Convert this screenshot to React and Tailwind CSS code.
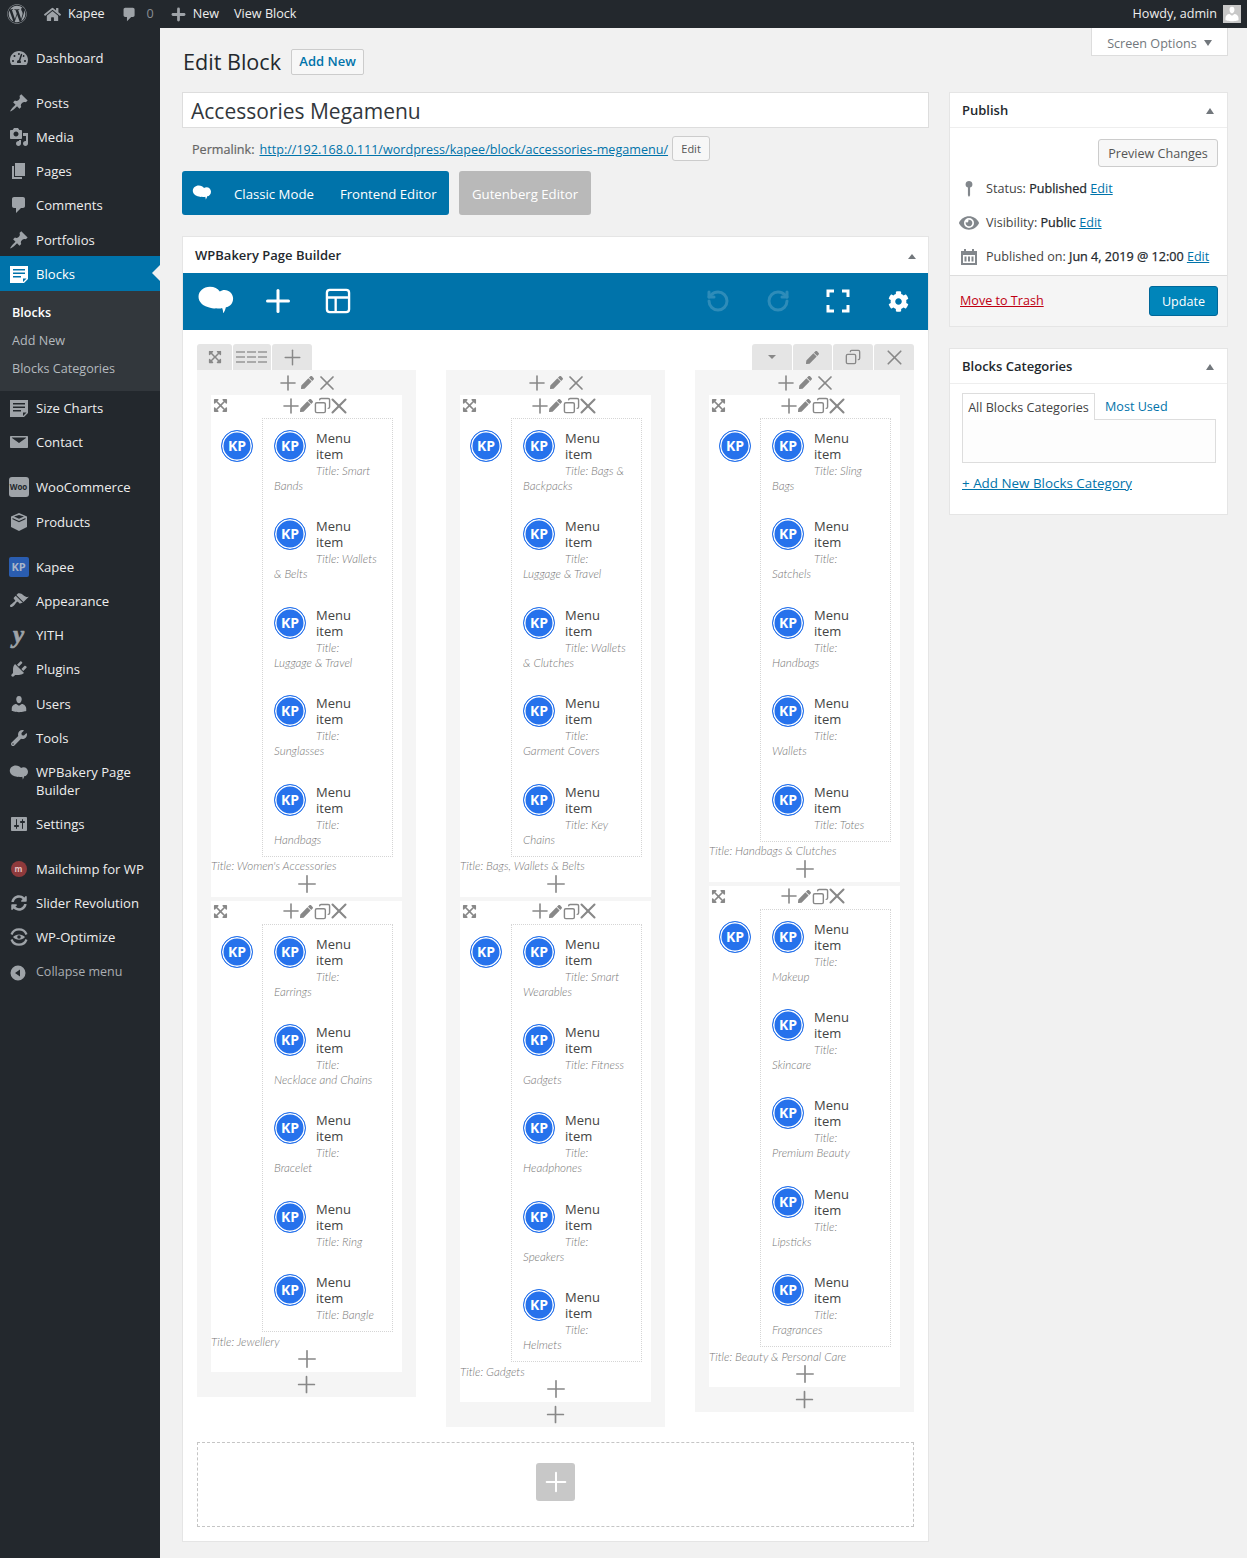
import React from 'react';
import { FaWordpress, FaHome, FaTachometerAlt, FaWrench, FaEye, FaCog, FaExpandArrowsAlt, FaPen, FaSyncAlt } from 'react-icons/fa';
import { Plus, X, Copy, RotateCcw, RotateCw } from 'lucide-react';

// dashicon style 20x20 glyphs
const glyphs = {
    pin: 'M10.44 3.02l1.82-1.82 6.36 6.35-1.83 1.82c-1.05-.68-2.48-.57-3.41.36l-.75.75c-.92.93-1.04 2.35-.35 3.41l-1.83 1.82-2.41-2.41-2.8 2.79c-.42.42-3.38 2.71-3.8 2.29s1.86-3.39 2.28-3.81l2.79-2.79L4.1 9.36l1.83-1.82c1.05.69 2.48.57 3.4-.36l.75-.75c.93-.92 1.05-2.35.36-3.41z',
    media: 'M13 11V4c0-.55-.45-1-1-1h-1.67L9 1H5L3.67 3H2c-.55 0-1 .45-1 1v7c0 .55.45 1 1 1h10c.55 0 1-.45 1-1zM7 4.5c1.38 0 2.5 1.12 2.5 2.5S8.38 9.5 7 9.5 4.5 8.38 4.5 7 5.62 4.5 7 4.5zM14 6h5v10.5c0 1.38-1.12 2.5-2.5 2.5S14 17.88 14 16.5s1.12-2.5 2.5-2.5c.17 0 .34.02.5.05V9h-3V6zm-4 8.05V13h2v3.5c0 1.38-1.12 2.5-2.5 2.5S7 17.88 7 16.5 8.12 14 9.5 14c.17 0 .34.02.5.05z',
    pages: 'M6 15V2h10v13H6zm-1 1h8v2H3V5h2v11z',
    comment: 'M5 2h9c1.1 0 2 .9 2 2v7c0 1.1-.9 2-2 2h-2l-5 5v-5H5c-1.1 0-2-.9-2-2V4c0-1.1.9-2 2-2z',
    post: 'M1 2h18v13l-4 4H1V2zm3 3v1.5h12V5H4zm0 3.5V10h12V8.5H4zM4 12v1.5h8V12H4zm10 2.5V18l3.5-3.5H14z',
    mail: 'M2 4h16c.6 0 1 .4 1 1v10c0 .6-.4 1-1 1H2c-.6 0-1-.4-1-1V5c0-.6.4-1 1-1zm1 2l7 5 7-5v-.5H3V6z',
    box: 'M10 1l8 3.5v10.5L10 19l-8-4V4.5L10 1zm0 2L5 4.6l5 2.2 5-2.2L10 3zM3.5 6v1.2l6.5 3 6.5-3V6L10 9 3.5 6z',
    brush: 'M14.48 11.06L7.41 3.99l1.5-1.5c.5-.56 2.3-.47 3.51.32 1.21.8 1.43 1.28 2.91 2.1 1.18.64 2.45 1.26 4.45.85zm-.71.71L6.7 4.7 4.93 6.47c-.39.39-.39 1.02 0 1.41l1.06 1.06c.39.39.39 1.03 0 1.42-.6.6-1.43 1.11-2.21 1.69-.35.26-.7.53-1.01.84C1.43 13.23.4 14.89 1.3 15.79c.9.89 2.56-.13 3.91-1.48.31-.31.58-.66.85-1.01.57-.78 1.08-1.61 1.69-2.21.39-.39 1.02-.39 1.41 0l1.06 1.06c.39.39 1.02.39 1.41 0z',
    plug: 'M13.11 4.36L9.87 7.6 8 5.73l3.24-3.24c.35-.34 1.05-.2 1.56.32.52.51.66 1.21.31 1.55zm-8 1.77l.91-1.12 9.01 9.01-1.19.84c-.71.71-2.63 1.16-3.82 1.16H6.14L4.9 17.26c-.59.59-1.54.59-2.12 0-.59-.58-.59-1.53 0-2.12l1.24-1.24v-3.88c0-1.13.4-3.19 1.09-3.89zm7.26 3.97l3.24-3.24c.34-.35 1.04-.21 1.55.31.52.51.66 1.21.31 1.55l-3.24 3.25z',
    user: 'M10 9.25c-2.27 0-2.73-3.44-2.73-3.44C7 4.02 7.82 2 9.97 2c2.16 0 2.98 2.02 2.71 3.81 0 0-.41 3.44-2.68 3.44zm0 2.57L12.72 10c2.39 0 4.52 2.33 4.52 4.53v2.49s-3.65 1.13-7.24 1.13c-3.65 0-7.24-1.13-7.24-1.13v-2.49c0-2.25 1.94-4.48 4.47-4.48z',
    sliders: 'M18 16V4c0-.55-.45-1-1-1H3c-.55 0-1 .45-1 1v12c0 .55.45 1 1 1h14c.55 0 1-.45 1-1zM8 11h1c.55 0 1 .45 1 1s-.45 1-1 1H8v1.5c0 .28-.22.5-.5.5s-.5-.22-.5-.5V13H6c-.55 0-1-.45-1-1s.45-1 1-1h1V5.5c0-.28.22-.5.5-.5s.5.22.5.5V11zm5-2h-1c-.55 0-1-.45-1-1s.45-1 1-1h1V5.5c0-.28.22-.5.5-.5s.5.22.5.5V7h1c.55 0 1 .45 1 1s-.45 1-1 1h-1v5.5c0 .28-.22.5-.5.5s-.5-.22-.5-.5V9z',
    cloud: 'M6.800 2.500c2.300 0 4.200 1 5.200 2.500.7-.5 1.600-.8 2.500-.8 2.500 0 4.500 1.900 4.500 4.500 0 2.400-1.600 4.400-3.800 4.600-.2 1.100-.7 2.300-1.500 3.200.1-1-.1-2-.5-2.800-1 .4-2.100.3-3.200.1-.9.2-1.900.2-3.100-.3C3.500 13 .8 10.700.8 7.800.8 4.800 3.400 2.500 6.800 2.500z',
    collapse: 'M10 2.500a7.500 7.500 0 1 1 0 15 7.500 7.500 0 0 1 0-15zM12 6.500L7 10l5 3.500v-7z',
    key: 'M10 1a3.800 3.800 0 0 1 1.200 7.400V17l-1.200 2-1.200-2V8.400A3.800 3.800 0 0 1 10 1z',
    calendar: 'M5 2h2v2h6V2h2v2h3v14H2V4h3V2zM4 8v8h12V8H4zm1.500 1.500h2v5h-2v-5zm3.500 0h2v5H9v-5zm3.500 0h2v5h-2v-5z',
};

const Glyph = ({ name, className }) => (
    <svg viewBox="0 0 20 20" fill="currentColor" className={className}>
        <path d={glyphs[name]} fillRule="evenodd" />
    </svg>
);

const side = 'w-[20px] h-[20px] text-[#9ea3a8]';

const WooIcon = () => (
    <span className="flex h-[20px] w-[20px] items-center justify-center rounded-[3px] bg-[#9ea3a8] text-[8px] font-bold text-[#23282d]">Woo</span>
);
const KpIcon = () => (
    <span className="flex h-[20px] w-[20px] items-center justify-center rounded-[2px] bg-[#2a5db0] text-[11px] font-bold text-[#a9b5c9]">KP</span>
);
const YithIcon = () => (
    <span className="font-['Liberation_Serif',serif] text-[25px] font-bold italic leading-[20px] text-[#9ea3a8] [-webkit-text-stroke:0.7px_#9ea3a8]">y</span>
);
const MailchimpIcon = () => (
    <span className="flex h-[16px] w-[16px] items-center justify-center rounded-full bg-[#8e3a3c] text-[8px] font-bold text-[#e5c5c5]">m</span>
);
const OptimizeIcon = () => (
    <svg viewBox="0 0 20 20" className={side} fill="none" stroke="currentColor" strokeWidth="2.2">
        <path d="M2.500 7.500a8 8 0 0 1 15 0M17.500 12.500a8 8 0 0 1-15 0" />
        <path d="M4 10c3-3.500 9-3.500 12 0-3 3.500-9 3.500-12 0z" fill="currentColor" stroke="none" />
        <circle cx="10" cy="10" r="1.800" fill="#23282d" stroke="none" />
    </svg>
);

const menu = [
    [{ label: 'Dashboard', icon: <FaTachometerAlt className="h-[18px] w-[18px] text-[#9ea3a8]" /> }],
    [
        { label: 'Posts', icon: <Glyph name="pin" className={side} /> },
        { label: 'Media', icon: <Glyph name="media" className={side} /> },
        { label: 'Pages', icon: <Glyph name="pages" className={side} /> },
        { label: 'Comments', icon: <Glyph name="comment" className={side} /> },
        { label: 'Portfolios', icon: <Glyph name="pin" className={side} /> },
        { label: 'Blocks', active: true, icon: <Glyph name="post" className="h-[20px] w-[20px] text-white" /> },
        { label: 'Size Charts', icon: <Glyph name="post" className={side} /> },
        { label: 'Contact', icon: <Glyph name="mail" className={side} /> },
    ],
    [
        { label: 'WooCommerce', icon: <WooIcon /> },
        { label: 'Products', icon: <Glyph name="box" className={side} /> },
    ],
    [
        { label: 'Kapee', icon: <KpIcon /> },
        { label: 'Appearance', icon: <Glyph name="brush" className={side} /> },
        { label: 'YITH', icon: <YithIcon /> },
        { label: 'Plugins', icon: <Glyph name="plug" className={side} /> },
        { label: 'Users', icon: <Glyph name="user" className={side} /> },
        { label: 'Tools', icon: <FaWrench className="h-[16px] w-[16px] text-[#9ea3a8]" /> },
        { label: 'WPBakery Page Builder', tall: true, icon: <Glyph name="cloud" className={side} /> },
        { label: 'Settings', icon: <Glyph name="sliders" className={side} /> },
    ],
    [
        { label: 'Mailchimp for WP', icon: <MailchimpIcon /> },
        { label: 'Slider Revolution', icon: <FaSyncAlt className="h-[16px] w-[16px] text-[#9ea3a8]" /> },
        { label: 'WP-Optimize', icon: <OptimizeIcon /> },
    ],
];

const columns = [
    [
        {
            title: "Title: Women's Accessories",
            items: [['Title: Smart', 'Bands'], ['Title: Wallets', '& Belts'], ['Title:', 'Luggage & Travel'], ['Title:', 'Sunglasses'], ['Title:', 'Handbags']],
        },
        {
            title: 'Title: Jewellery',
            items: [['Title:', 'Earrings'], ['Title:', 'Necklace and Chains'], ['Title:', 'Bracelet'], ['Title: Ring'], ['Title: Bangle']],
        },
    ],
    [
        {
            title: 'Title: Bags, Wallets & Belts',
            items: [['Title: Bags &', 'Backpacks'], ['Title:', 'Luggage & Travel'], ['Title: Wallets', '& Clutches'], ['Title:', 'Garment Covers'], ['Title: Key', 'Chains']],
        },
        {
            title: 'Title: Gadgets',
            items: [['Title: Smart', 'Wearables'], ['Title: Fitness', 'Gadgets'], ['Title:', 'Headphones'], ['Title:', 'Speakers'], ['Title:', 'Helmets']],
        },
    ],
    [
        {
            title: 'Title: Handbags & Clutches',
            items: [['Title: Sling', 'Bags'], ['Title:', 'Satchels'], ['Title:', 'Handbags'], ['Title:', 'Wallets'], ['Title: Totes']],
        },
        {
            title: 'Title: Beauty & Personal Care',
            items: [['Title:', 'Makeup'], ['Title:', 'Skincare'], ['Title:', 'Premium Beauty'], ['Title:', 'Lipsticks'], ['Title:', 'Fragrances']],
        },
    ],
];

const Sidebar = () => (
    <aside className="w-[160px] shrink-0 bg-[#23282d] pt-[12.6px] text-[13.1px] text-[#eeeeee]">
        {menu.map((group, i) => (
            <div key={i} className="mb-[11px]">
                {group.map(item => (
                    <React.Fragment key={item.label}>
                        <div className={`relative flex items-center ${item.tall ? 'h-[52px]' : item.active ? '-mt-[0.4px] h-[34.6px]' : 'h-[34.2px]'} ${item.active ? 'bg-[#0073aa] text-white' : ''}`}>
                            <span className={`flex w-[36px] shrink-0 justify-center pl-[1px] ${item.tall ? 'self-start pt-[8px]' : ''}`}>{item.icon}</span>
                            <span className="leading-[18px]">{item.label}</span>
                            {item.active && (
                                <span className="absolute right-0 top-[9px] h-0 w-0 border-y-[8px] border-r-[8px] border-y-transparent border-r-[#f1f1f1]" />
                            )}
                        </div>
                        {item.active && (
                            <div className="bg-[#32373c] py-[8px] pl-[12px] text-[12.6px] leading-[28px] text-[#b4b9be]">
                                <div className="font-semibold text-white">Blocks</div>
                                <div>Add New</div>
                                <div>Blocks Categories</div>
                            </div>
                        )}
                    </React.Fragment>
                ))}
            </div>
        ))}
        <div className="-mt-[10px] flex h-[34px] items-center text-[12.5px] text-[#aaaeb2]">
            <span className="flex w-[36px] shrink-0 justify-center">
                <Glyph name="collapse" className={side} />
            </span>
            Collapse menu
        </div>
    </aside>
);

const TopBar = () => (
    <header className="flex h-[28px] items-center justify-between bg-[#23282d] pr-[6px] text-[12.6px] text-[#eeeeee]">
        <div className="flex items-center">
            <FaWordpress className="ml-[7px] h-[20px] w-[20px] text-[#9ea3a8]" />
            <FaHome className="ml-[17px] h-[17px] w-[17px] text-[#9ea3a8]" />
            <span className="ml-[7px]">Kapee</span>
            <Glyph name="comment" className="ml-[16px] h-[17px] w-[17px] text-[#9ea3a8]" />
            <span className="ml-[9px] text-[#8a8f94]">0</span>
            <Plus size={19} strokeWidth={3.5} className="ml-[15px] text-[#9ea3a8]" />
            <span className="ml-[5px]">New</span>
            <span className="ml-[15px]">View Block</span>
        </div>
        <div className="flex items-center gap-[6px]">
            <span>Howdy, admin</span>
            <span className="flex h-[18px] w-[18px] items-end justify-center overflow-hidden bg-[#c8c8c8]">
                <Glyph name="user" className="h-[18px] w-[18px] text-white" />
            </span>
        </div>
    </header>
);

const KpBadge = ({ className }) => (
    <span className={`flex h-[32px] w-[32px] items-center justify-center rounded-full border-[1.5px] border-[#2672ec] bg-[#2672ec] text-[14px] font-bold leading-none text-white shadow-[inset_0_0_0_1.5px_#ffffff] ${className}`}>
        KP
    </span>
);

const MenuItem = ({ lines }) => (
    <div className="flow-root">
        <KpBadge className="float-left mb-[10px] mr-[10px]" />
        <div className="text-[13px] leading-[16px] text-[#444444]">Menu<br />item</div>
        <div className="whitespace-nowrap pt-[1px] font-['Lato',sans-serif] text-[11.6px] font-light italic leading-[15px] text-[#777777]">
            {lines.map((line, i) => (
                <React.Fragment key={i}>
                    {i > 0 && <br />}
                    {line}
                </React.Fragment>
            ))}
        </div>
    </div>
);

const Section = ({ section }) => (
    <div className="bg-white">
        <div className="relative flex h-[23px] items-center justify-center pb-[2px] pl-[17px]">
            <FaExpandArrowsAlt className="absolute left-[2px] top-[3px] h-[15px] w-[15px] text-[#888888]" />
            <Plus size={24} strokeWidth={1.6} className="-mx-[5px] text-[#888888]" />
            <FaPen className="ml-[2px] h-[13px] w-[13px] text-[#888888]" />
            <Copy size={17} strokeWidth={2} className="ml-[1px] -scale-x-100 text-[#888888]" />
            <X size={26} strokeWidth={1.9} className="-mx-[6px] ml-[-5px] text-[#888888]" />
        </div>
        <div className="flex items-start pr-[9px]">
            <KpBadge className="ml-[10px] mr-[9px] mt-[12px] shrink-0" />
            <div className="flex-1 space-y-[25.4px] border border-dotted border-[#d5d5d5] px-[11px] pb-[9px] pt-[11px]">
                {section.items.map((lines, i) => <MenuItem key={i} lines={lines} />)}
            </div>
        </div>
        <div className="mt-[1.5px] font-['Lato',sans-serif] text-[11.6px] font-light italic leading-[15px] text-[#777777]">{section.title}</div>
        <div className="flex h-[23.5px] items-center justify-center pb-[2.5px]">
            <Plus size={28} strokeWidth={1.4} className="-my-[4px] text-[#888888]" />
        </div>
    </div>
);

const Column = ({ sections }) => (
    <div className="bg-[#f5f5f5] px-[14px]">
        <div className="flex h-[25px] items-center justify-center">
            <Plus size={24} strokeWidth={1.6} className="-mx-[5px] text-[#888888]" />
            <FaPen className="ml-[6px] h-[13px] w-[13px] text-[#888888]" />
            <X size={24} strokeWidth={1.7} className="-mx-[6px] ml-[1px] text-[#888888]" />
        </div>
        <div className="space-y-[4px]">
            {sections.map(section => <Section key={section.title} section={section} />)}
        </div>
        <div className="flex h-[25px] items-center justify-center">
            <Plus size={27} strokeWidth={1.5} className="text-[#888888]" />
        </div>
    </div>
);

const RowTab = ({ w, children }) => (
    <span className={`flex h-[26px] items-center justify-center rounded-t-[3px] bg-[#e5e5e5] text-[#888888] ${w}`}>{children}</span>
);

const Builder = () => (
    <section className="border border-[#e5e5e5] bg-white">
        <div className="flex h-[36px] items-center justify-between pl-[12px] pr-[12px] pt-[2px]">
            <h2 className="text-[13px] font-semibold text-[#23282d]">WPBakery Page Builder</h2>
            <span className="h-0 w-0 border-x-[4px] border-b-[5px] border-x-transparent border-b-[#72777c]" />
        </div>
        <div className="flex h-[57px] items-center bg-[#0073aa] pb-[1px] text-white">
            <Glyph name="cloud" className="ml-[14px] h-[38px] w-[38px]" />
            <Plus size={36} strokeWidth={2} className="ml-[25px]" />
            <svg viewBox="0 0 24 24" fill="none" stroke="currentColor" strokeWidth="2" className="ml-[28px] h-[28px] w-[28px]">
                <rect x="2.500" y="2.500" width="19" height="19" rx="2.500" />
                <path d="M2.500 9h19M10 9v12.500" />
            </svg>
            <div className="ml-auto flex items-center gap-[34px] pr-[17px]">
                <span className="flex w-[26px] justify-center"><RotateCcw size={24} strokeWidth={3} className="text-[#2e8cb9]" /></span>
                <span className="flex w-[26px] justify-center"><RotateCw size={24} strokeWidth={3} className="text-[#2e8cb9]" /></span>
                <span className="flex w-[26px] justify-center">
                    <svg viewBox="0 0 24 24" fill="none" stroke="currentColor" strokeWidth="3" className="h-[24px] w-[24px]">
                        <path d="M2 8V2h6M16 2h6v6M22 16v6h-6M8 22H2v-6" />
                    </svg>
                </span>
                <span className="flex w-[26px] justify-center"><FaCog className="h-[21px] w-[21px]" /></span>
            </div>
        </div>
        <div className="px-[14px] pb-[14px] pt-[14px]">
            <div className="flex justify-between">
                <div className="flex gap-[1px]">
                    <RowTab w="w-[35px]"><FaExpandArrowsAlt className="h-[14px] w-[14px]" /></RowTab>
                    <RowTab w="w-[38px]">
                        <svg viewBox="0 0 32 14" fill="#aaaaaa" className="h-[14px] w-[32px]">
                            <path d="M0 1h9v2H0zM11 1h9v2h-9zM22 1h9v2h-9zM0 6h9v2H0zM11 6h9v2h-9zM22 6h9v2h-9zM0 11h9v2H0zM11 11h9v2h-9zM22 11h9v2h-9z" />
                        </svg>
                    </RowTab>
                    <RowTab w="w-[40px]"><Plus size={25} strokeWidth={1.4} /></RowTab>
                </div>
                <div className="flex gap-[1px]">
                    <RowTab w="w-[40px]"><span className="h-0 w-0 border-x-[4px] border-t-[4px] border-x-transparent border-t-[#888888]" /></RowTab>
                    <RowTab w="w-[39px]"><FaPen className="h-[13px] w-[13px]" /></RowTab>
                    <RowTab w="w-[40px]"><Copy size={16} strokeWidth={2} className="-scale-x-100" /></RowTab>
                    <RowTab w="w-[40px]"><X size={25} strokeWidth={1.6} /></RowTab>
                </div>
            </div>
            <div className="grid grid-cols-3 items-start gap-[30px]">
                {columns.map((sections, i) => <Column key={i} sections={sections} />)}
            </div>
            <div className="mt-[15px] flex h-[85px] items-center justify-center border border-dashed border-[#c5c5c5] pb-[5px]">
                <span className="flex h-[38px] w-[39px] items-center justify-center rounded-[3px] bg-[#c8c8c8] text-white">
                    <Plus size={32} strokeWidth={1.5} />
                </span>
            </div>
        </div>
    </section>
);

const Caret = () => <span className="h-0 w-0 border-x-[4px] border-b-[6px] border-x-transparent border-b-[#72777c]" />;

const MetaRow = ({ icon, children }) => (
    <div className="flex h-[34px] items-center text-[12.6px] text-[#444444]">
        <span className="flex w-[36px] shrink-0 justify-center pl-[2px]">{icon}</span>
        <span>{children}</span>
    </div>
);

const strong = 'font-normal text-[#23282d] [-webkit-text-stroke:0.25px_#23282d]';

const PublishBox = () => (
    <section className="border border-[#e5e5e5] bg-white">
        <div className="flex h-[35px] items-center justify-between border-b border-[#eeeeee] pl-[12px] pr-[13px] pt-[2px]">
            <h2 className="text-[13px] font-semibold text-[#23282d]">Publish</h2>
            <Caret />
        </div>
        <div className="flex justify-end pr-[9px] pt-[11px]">
            <span className="flex h-[28px] w-[120px] items-center justify-center rounded-[3px] border border-[#cccccc] bg-[#f7f7f7] pt-[2px] text-[12.6px] text-[#555555]">Preview Changes</span>
        </div>
        <div className="pt-[5px]">
            <MetaRow icon={<Glyph name="key" className="h-[18px] w-[18px] text-[#82878c]" />}>
                Status: <b className={strong}>Published</b> <a className="text-[#0073aa] underline">Edit</a>
            </MetaRow>
            <MetaRow icon={<FaEye className="h-[20px] w-[20px] text-[#82878c]" />}>
                Visibility: <b className={strong}>Public</b> <a className="text-[#0073aa] underline">Edit</a>
            </MetaRow>
            <MetaRow icon={<Glyph name="calendar" className="h-[20px] w-[20px] text-[#82878c]" />}>
                Published on: <b className={strong}>Jun 4, 2019 @ 12:00</b> <a className="text-[#0073aa] underline">Edit</a>
            </MetaRow>
        </div>
        <div className="mt-[1px] flex h-[51px] items-center justify-between border-t border-[#dddddd] bg-[#f5f5f5] pl-[10px] pr-[9px]">
            <a className="text-[12.6px] text-[#bf0012] underline">Move to Trash</a>
            <span className="flex h-[30px] w-[69px] items-center justify-center rounded-[3px] border border-[#006799] bg-[#0085ba] pt-[2px] text-[12.6px] text-white">Update</span>
        </div>
    </section>
);

const CategoriesBox = () => (
    <section className="mt-[21px] h-[167px] border border-[#e5e5e5] bg-white">
        <div className="flex h-[35px] items-center justify-between border-b border-[#eeeeee] pl-[12px] pr-[13px] pt-[2px]">
            <h2 className="text-[13px] font-semibold text-[#23282d]">Blocks Categories</h2>
            <Caret />
        </div>
        <div className="px-[12px] pt-[9px]">
            <div className="flex items-end text-[12.6px]">
                <span className="relative z-10 -mb-[1px] flex h-[27px] w-[133px] items-center justify-center border border-b-0 border-[#dddddd] bg-white pt-[2px] text-[#444444]">All Blocks Categories</span>
                <span className="ml-[10px] pb-[2px] text-[#0073aa]">Most Used</span>
            </div>
            <div className="h-[44px] w-[254px] border border-[#dddddd] bg-[#fdfdfd]" />
            <a className="mt-[10px] block text-[13.4px] font-medium text-[#0073aa] underline">+ Add New Blocks Category</a>
        </div>
    </section>
);

const App = () => (
    <div className="min-h-[1558px] w-[1247px] bg-[#f1f1f1] font-['Open_Sans',sans-serif] text-[13px]">
        <TopBar />
        <div className="flex min-h-[1530px] items-stretch">
            <Sidebar />
            <main className="w-[1087px] pl-[22px] pr-[19px]">
                <div className="flex h-[64px] items-start justify-between">
                    <div className="flex items-center gap-[10px] pl-[1px] pt-[19px]">
                        <h1 className="text-[21.6px] leading-[30px] text-[#23282d]">Edit Block</h1>
                        <span className="flex h-[26px] w-[73px] items-center justify-center rounded-[2px] border border-[#cccccc] bg-[#f7f7f7] text-[13px] font-semibold text-[#0073aa]">Add New</span>
                    </div>
                    <div className="flex h-[28px] w-[137px] items-center justify-center gap-[7px] border border-t-0 border-[#dddddd] bg-white pt-[5px] text-[12.6px] text-[#72777c]">
                        Screen Options
                        <span className="-mt-[3px] h-0 w-0 border-x-[4px] border-t-[6px] border-x-transparent border-t-[#72777c]" />
                    </div>
                </div>
                <div className="flex items-start justify-between">
                    <div className="w-[747px]">
                        <div className="flex h-[36px] items-center border border-[#dddddd] bg-white pl-[8px] pt-[3px] text-[21px] text-[#32373c]">Accessories Megamenu</div>
                        <div className="mt-[8px] flex h-[25px] items-center pl-[10px] text-[12.6px] text-[#666666]">
                            <span className="mt-[3px] [-webkit-text-stroke:0.2px_#666666]">Permalink:</span>
                            <a className="ml-[5px] mt-[3px] text-[#0073aa] underline">http://192.168.0.111/wordpress/kapee/block/accessories-megamenu/</a>
                            <span className="ml-[4px] flex h-[25px] w-[38px] items-center justify-center rounded-[3px] border border-[#cccccc] bg-[#f7f7f7] pt-[1px] text-[11px] text-[#555555]">Edit</span>
                        </div>
                        <div className="mt-[10px] flex gap-[10px] text-[13.2px] text-white">
                            <div className="flex h-[44px] w-[267px] items-center rounded-[3px] bg-[#0073aa] pt-[3px]">
                                <Glyph name="cloud" className="-mt-[3px] ml-[10px] h-[20px] w-[20px]" />
                                <span className="ml-[22px]">Classic Mode</span>
                                <span className="ml-[26px]">Frontend Editor</span>
                            </div>
                            <div className="flex h-[44px] w-[132px] items-center justify-center rounded-[3px] bg-[#b9b9b9] pt-[3px]">Gutenberg Editor</div>
                        </div>
                        <div className="mt-[21px]">
                            <Builder />
                        </div>
                    </div>
                    <div className="w-[279px]">
                        <PublishBox />
                        <CategoriesBox />
                    </div>
                </div>
            </main>
        </div>
    </div>
);

export default App;
